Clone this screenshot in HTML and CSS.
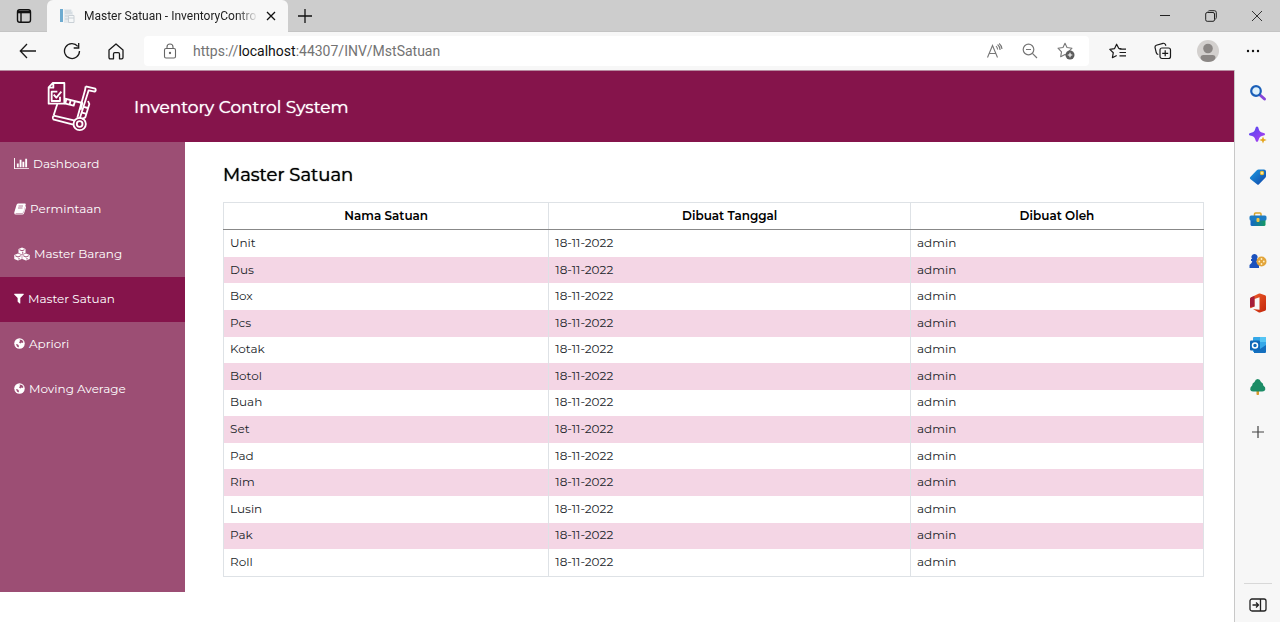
FILE: index.html
```html
<!DOCTYPE html>
<html lang="id">
<head>
<meta charset="utf-8">
<title>Master Satuan - InventoryControl</title>
<link rel="stylesheet" href="styles.css">
</head>
<body>
<div class="browser">
  <div class="tabbar">
    <button class="icon-btn tab-actions" aria-label="Tab actions"><svg width="16" height="16" viewBox="0 0 16 16" fill="none" stroke="#111" stroke-width="1.4"><rect x="1.5" y="1.7" width="13" height="12.6" rx="2.2"/><path d="M1.5 4h13" stroke-width="2.6"/><path d="M5 4v10"/></svg></button>
    <div class="tab">
      <svg class="favicon" width="16" height="16" viewBox="0 0 16 16"><path d="M1 1h3v13H1z" fill="#6eabd0"/><path d="M5 1h7l2 3v11H5z" fill="#e6eaed"/><path d="M6 3h6M6 5h7M6 8h3M6 11h3" stroke="#c6d0d8"/><path d="M9.500 7.500h5.500v7H9.500zM9.500 10h5.500" fill="#f5f7f8" stroke="#c9d0d6"/></svg>
      <span class="tab-title">Master Satuan - InventoryContro</span>
      <button class="icon-btn tab-close" aria-label="Close tab"><svg width="10" height="10" viewBox="0 0 10 10" stroke="#111" stroke-width="1.3"><path d="M1 1l8 8M9 1L1 9"/></svg></button>
    </div>
    <button class="icon-btn new-tab" aria-label="New tab"><svg width="14" height="14" viewBox="0 0 14 14" stroke="#111" stroke-width="1.3"><path d="M7 0v14M0 7h14"/></svg></button>
    <div class="window-controls">
      <button class="icon-btn" aria-label="Minimize"><svg width="12" height="12" viewBox="0 0 12 12" stroke="#222"><path d="M1 5.500h10"/></svg></button>
      <button class="icon-btn" aria-label="Restore"><svg width="12" height="12" viewBox="0 0 12 12" fill="none" stroke="#222"><rect x=".7" y="2.500" width="8.800" height="8.800" rx="1.500"/><path d="M3 1.500Q3.400.7 4.500.7h5q1.800 0 1.800 1.800v5q0 1.300-1 1.700"/></svg></button>
      <button class="icon-btn" aria-label="Close"><svg width="12" height="12" viewBox="0 0 12 12" stroke="#333"><path d="M1 1l10 10M11 1L1 11"/></svg></button>
    </div>
  </div>

  <div class="toolbar">
    <div class="nav-buttons">
      <button class="icon-btn" aria-label="Back"><svg width="18" height="16" viewBox="0 0 18 16" fill="none" stroke="#1a1a1a" stroke-width="1.3"><path d="M17 8H1.500M8 1L1.300 8 8 15"/></svg></button>
      <button class="icon-btn" aria-label="Refresh"><svg width="18" height="18" viewBox="0 0 18 18" fill="none" stroke="#1a1a1a" stroke-width="1.3"><path d="M16.500 9A7.500 7.500 0 1 1 14.800 4.300M15.700 1v5h-5"/></svg></button>
      <button class="icon-btn" aria-label="Home"><svg width="16" height="17" viewBox="0 0 16 17" fill="none" stroke="#1a1a1a" stroke-width="1.3" stroke-linejoin="round"><path d="M1 7l7-6 7 6v7.500q0 1.300-1.300 1.300h-2.200V11q0-1.300-1.300-1.300H6.800q-1.300 0-1.300 1.300v4.800H2.300Q1 15.800 1 14.500z"/></svg></button>
    </div>
    <div class="address">
      <svg width="14" height="16" viewBox="0 0 14 16" fill="none" stroke="#666" stroke-width="1.1"><rect x="1.500" y="5.500" width="11" height="9.500" rx="1.500"/><path d="M4 5.500V4a3 3 0 0 1 6 0v1.500"/><circle cx="7" cy="10" r=".6" fill="#555"/></svg>
      <span class="url">https://<span class="host">localhost</span>:44307/INV/MstSatuan</span>
      <div class="address-actions">
        <button class="icon-btn" aria-label="Read aloud"><svg width="17" height="16" viewBox="0 0 17 16" fill="none" stroke="#777" stroke-width="1.1"><path d="M1.500 14.500L6.500 2.500l5 12M3.200 10.500h6.600M10 3.200q1.500 1.300 1.600 3.300M11.600 1.500q2.300 2 2.500 5.500M13.200.5q2.300 2 2.800 5.500"/></svg></button>
        <button class="icon-btn" aria-label="Zoom out"><svg width="16" height="16" viewBox="0 0 16 16" fill="none" stroke="#777" stroke-width="1.2"><circle cx="6.500" cy="6.500" r="5.300"/><path d="M10.400 10.400l4.600 4.600M4 6.500h5"/></svg></button>
        <button class="icon-btn" aria-label="Add to favorites"><svg width="18" height="18" viewBox="0 0 18 18" fill="none" stroke="#777" stroke-width="1.1" stroke-linejoin="round"><path d="M8 1.200l2 4.300 5 .7-3.500 3.600.7 4.500L8 12.500l-4.300 2.200.8-4.800L1 6.200l5-.7z"/><circle cx="13" cy="13" r="4.500" fill="#5c5c5c" stroke="none"/><path d="M13 10.700v4.600M10.700 13h4.600" stroke="#fff"/></svg></button>
      </div>
    </div>
    <div class="profile-actions">
      <button class="icon-btn" aria-label="Favorites"><svg width="18" height="17" viewBox="0 0 18 17" fill="none" stroke="#1a1a1a" stroke-width="1.2" stroke-linejoin="round"><path d="M12.500 5.800L9.700 5.300 7.600 1.200 5.600 5.600.8 6.400 4.300 9.700l-.9 5 4.300-2.200M10.500 6.200h6.500M10.500 9.500h6.500M10.500 12.800h6.500"/></svg></button>
      <button class="icon-btn" aria-label="Collections"><svg width="18" height="18" viewBox="0 0 18 18" fill="none" stroke="#1a1a1a" stroke-width="1.2"><rect x="6" y="6" width="10.500" height="10.500" rx="2"/><path d="M11.200 8.300v6M8.200 11.300h6M4.300 12.500Q2.800 12.300 2.300 10.800L1 5.500Q.8 3.800 2.300 3.200L9 1.300q1.800-.3 2.400 1.200l.5 1.300"/></svg></button>
      <button class="icon-btn" aria-label="Profile"><svg width="22" height="22" viewBox="0 0 22 22"><defs><clipPath id="avatar"><circle cx="11" cy="11" r="11"/></clipPath></defs><g clip-path="url(#avatar)"><path fill="#d3d0ce" d="M0 0h22v22H0z"/><circle cx="11" cy="8.500" r="4.800" fill="#8b8785"/><path d="M3.500 18q0-3 3-3h9q3 0 3 3l-2 4h-11z" fill="#8b8785"/></g></svg></button>
      <button class="icon-btn" aria-label="More"><svg width="14" height="4" viewBox="0 0 14 4" fill="#111"><circle cx="2" cy="2" r="1.200"/><circle cx="7" cy="2" r="1.200"/><circle cx="12" cy="2" r="1.200"/></svg></button>
    </div>
  </div>

  <div class="viewport">
    <div class="page">
      <header class="app-header">
        <svg class="logo" width="54" height="54" viewBox="140 30 162 162" fill="none" stroke="#fff" stroke-width="5.500" stroke-linejoin="round"><path d="M160 39h35v62h-47V52zM148 53h14V39M174 65h-17v28h25V80M163 74l8 9 15-18"/><path d="M174 102l-11 34M197 86l52 13-5 20M201 87l-3 14 25 6 4-14M214 91l-3 12"/><path d="M163 137l64 15M161 148l61 16M163 137q-5 6-2 11"/><path d="M259 49l29 7q3 6-2 9l-18-4-27 85M259 49l-2 12-23 82M266 93l4 9-12 40-10 5M251 110l14 4M245 127l14 4"/><circle cx="241" cy="162" r="18.500"/><circle cx="241" cy="162" r="8.500"/></svg>
        <h1 class="brand">Inventory Control System</h1>
      </header>
      <div class="app-body">
        <nav class="menu">
          <a href="#"><svg width="15" height="13" viewBox="0 0 2048 1792"><path d="M640 896v512h-256v-512h256zm384-512v1024h-256v-1024h256zm1024 1152v128h-2048v-1536h128v1408h1920zm-640-896v768h-256v-768h256zm384-384v1152h-256v-1152h256z"/></svg>Dashboard</a>
          <a href="#"><svg width="12" height="13" viewBox="0 0 24 26"><path d="M8 3h14q2 0 1.500 2L19 20q-.6 2-2.500 2H4q-1.500 0-1 1h14q1.500 0 2.200-2L23 8q1.500 1 1 3l-4 12q-.7 2-3 2H4q-4 0-3.500-4L5 6q.7-3 3-3z"/><path d="M9 8h9M8 12h9" stroke="#9c4e74" stroke-width="1.500"/></svg>Permintaan</a>
          <a href="#"><svg width="16" height="14" viewBox="0 0 32 28"><path d="M16 1l7 3v8l-7 3-7-3V4zM8 13l7.500 3v8L8 27l-7.500-3v-8zM24 13l7.500 3v8L24 27l-7.500-3v-8z"/><path d="M11 5.500L16 7.500 21 5.500M2.500 17.500L8 20l5.500-2.500M18.500 17.500L24 20l5.500-2.500M17.500 9.500v4M10 22v3M26 22v3" fill="none" stroke="#9c4e74" stroke-width="2"/></svg>Master Barang</a>
          <a href="#" class="active" aria-current="page"><svg width="10" height="13" viewBox="180 130 1440 1600"><path d="M1595 295q17 41-14 70l-493 493v742q0 42-39 59-13 5-25 5-27 0-45-19l-256-256q-19-19-19-45v-486l-493-493q-31-29-14-70 17-39 59-39h1280q42 0 59 39z"/></svg>Master Satuan</a>
          <a href="#"><svg width="11" height="13" viewBox="0 0 22 26"><circle cx="11" cy="13" r="10.500"/><path d="M11 5l5 1 3 4-2 2-2-1-2 2-3-2 2-3zM4 14l4 1 2 3-1 3-3-2z" fill="#9c4e74"/></svg>Apriori</a>
          <a href="#"><svg width="11" height="13" viewBox="0 0 22 26"><circle cx="11" cy="13" r="10.500"/><path d="M11 5l5 1 3 4-2 2-2-1-2 2-3-2 2-3zM4 14l4 1 2 3-1 3-3-2z" fill="#9c4e74"/></svg>Moving Average</a>
        </nav>
        <main class="content">
          <h2 class="title">Master Satuan</h2>
          <table class="grid">
            <thead><tr><th class="col-name">Nama Satuan</th><th class="col-date">Dibuat Tanggal</th><th class="col-by">Dibuat Oleh</th></tr></thead>
            <tbody>
              <tr><td>Unit</td><td>18-11-2022</td><td>admin</td></tr>
              <tr><td>Dus</td><td>18-11-2022</td><td>admin</td></tr>
              <tr><td>Box</td><td>18-11-2022</td><td>admin</td></tr>
              <tr><td>Pcs</td><td>18-11-2022</td><td>admin</td></tr>
              <tr><td>Kotak</td><td>18-11-2022</td><td>admin</td></tr>
              <tr><td>Botol</td><td>18-11-2022</td><td>admin</td></tr>
              <tr><td>Buah</td><td>18-11-2022</td><td>admin</td></tr>
              <tr><td>Set</td><td>18-11-2022</td><td>admin</td></tr>
              <tr><td>Pad</td><td>18-11-2022</td><td>admin</td></tr>
              <tr><td>Rim</td><td>18-11-2022</td><td>admin</td></tr>
              <tr><td>Lusin</td><td>18-11-2022</td><td>admin</td></tr>
              <tr><td>Pak</td><td>18-11-2022</td><td>admin</td></tr>
              <tr><td>Roll</td><td>18-11-2022</td><td>admin</td></tr>
            </tbody>
          </table>
        </main>
      </div>
    </div>

    <aside class="rail">
      <svg width="0" height="0" class="defs"><defs>
        <linearGradient id="blue" x1="0" y1="0" x2="1" y2="1"><stop offset="0" stop-color="#1b9de2"/><stop offset="1" stop-color="#1244a8"/></linearGradient>
        <linearGradient id="violet" x1="0" y1="0" x2="1" y2="1"><stop offset="0" stop-color="#4a4af0"/><stop offset="1" stop-color="#b63df0"/></linearGradient>
        <linearGradient id="teal" x1="0" y1="0" x2="1" y2="0"><stop offset="0" stop-color="#1464c8"/><stop offset="1" stop-color="#159a63"/></linearGradient>
        <linearGradient id="red" x1="0" y1="0" x2="1" y2="1"><stop offset="0" stop-color="#f0602a"/><stop offset="1" stop-color="#c3260c"/></linearGradient>
      </defs></svg>
      <button class="icon-btn" aria-label="Search"><svg width="18" height="18" viewBox="0 0 18 18" fill="none"><path d="M11 11l4.500 4" stroke="#8645d8" stroke-width="3" stroke-linecap="round"/><circle cx="7" cy="7" r="4.800" fill="#dff1fb" stroke="#1a5fb8" stroke-width="2.200"/></svg></button>
      <button class="icon-btn" aria-label="Discover"><svg width="18" height="18" viewBox="0 0 18 18"><path d="M8 .5q1.300 0 1.700 2.300.6 3.300 4.100 3.900 2.300.4 2.300 1.500t-2.300 1.500q-3.500.6-4.100 3.900-.4 2.300-1.700 2.300t-1.700-2.300Q5.700 10.300 2.200 9.700-.1 9.300-.1 8.200t2.300-1.500q3.500-.6 4.100-3.900Q6.700.5 8 .5z" fill="url(#violet)"/><path d="M14 10.500l1 2.500 2.700 1-2.700 1-1 2.500-1-2.500-2.700-1 2.700-1z" fill="#e5a51d"/></svg></button>
      <button class="icon-btn" aria-label="Shopping"><svg width="18" height="18" viewBox="0 0 18 18"><path d="M9.500 1.500h5.500q2 0 2 2V8q0 1-.7 1.700l-6.300 6.500q-1 1-2 0L1.300 11q-1-1 0-2l6.500-6.800q.7-.7 1.700-.7z" fill="url(#blue)"/><circle cx="13" cy="5" r="1.600" fill="#fff3b8" stroke="#e9bb36" stroke-width="1.200"/></svg></button>
      <button class="icon-btn" aria-label="Tools"><svg width="18" height="18" viewBox="0 0 18 18"><path d="M5.500 6V4q0-1 1-1h4.500q1 0 1 1v2" fill="none" stroke="#d9a52c" stroke-width="1.500"/><rect x="1.500" y="8" width="15" height="8" rx="1.500" fill="url(#teal)"/><rect x=".5" y="5.500" width="17" height="5" rx="1.500" fill="#1d7cc4"/><rect x="7.500" y="8" width="3" height="4" rx="1" fill="#f2c744"/></svg></button>
      <button class="icon-btn" aria-label="Games"><svg width="18" height="18" viewBox="0 0 18 18"><path d="M5.500 2a3 3 0 0 1 2.300 5H9v2H7.500q.2 2.500 2.500 4v3H.5v-3Q3 11.500 3.300 9H2V7h1.200A3 3 0 0 1 5.500 2z" fill="#1c52bd"/><circle cx="12.500" cy="9.500" r="5" fill="#e2a43a"/><g fill="#fff0c6"><circle cx="12.500" cy="7" r=".9"/><circle cx="10.300" cy="9.500" r=".9"/><circle cx="14.800" cy="9.500" r=".9"/><circle cx="12.500" cy="12" r=".9"/></g></svg></button>
      <button class="icon-btn" aria-label="Office"><svg width="18" height="20" viewBox="0 0 18 20"><path d="M11 .5l5 1.700q1 .3 1 1.500v12.600q0 1.200-1 1.500l-5 1.700q-.8.200-1.500-.2L4 16l6.500.7V4.300L5.500 6v7.500L1.500 15.300Q1 15 1 14V6q0-1.300 1.200-1.800L9.500.8q.8-.5 1.500-.3z" fill="url(#red)"/><path d="M1 14V6q0-1.300 1.200-1.800L5.500 3v10.500z" fill="#a51d39"/></svg></button>
      <button class="icon-btn" aria-label="Outlook"><svg width="18" height="18" viewBox="0 0 18 18"><path d="M5 1h11q1 0 1 1v14H4V2q0-1 1-1z" fill="#35a8e8"/><path d="M11 1h6v5h-6z" fill="#55c5f4"/><path d="M5 10l6 3 6-4v7q0 1-1 1H5z" fill="#146fbe"/><rect x="1" y="4.500" width="10" height="10" rx="1" fill="#0e67b8"/><circle cx="6" cy="9.500" r="2.500" fill="none" stroke="#fff" stroke-width="1.500"/></svg></button>
      <button class="icon-btn" aria-label="Tree"><svg width="18" height="18" viewBox="0 0 18 18"><path d="M7.500 12h2.500v4.500q-1.200 1-2.500 0z" fill="#d99a2b"/><path d="M8.700 1Q11 1 12 4q2.500 1 2.300 3.500 2.500 1.500 2 4-.5 2-3 2H4q-2.500 0-2.800-2-.2-2.700 2-4Q3 5 5.500 4q1-3 3.200-3z" fill="#1c8c66"/></svg></button>
      <button class="icon-btn customize" aria-label="Customize"><svg width="14" height="14" viewBox="0 0 14 14" stroke="#444" stroke-width="1.200"><path d="M7 1v12M1 7h12"/></svg></button>
      <div class="rail-foot">
        <button class="icon-btn" aria-label="Hide sidebar"><svg width="18" height="14" viewBox="0 0 18 14" fill="none" stroke="#222" stroke-width="1.300"><rect x="1" y="1" width="16" height="12" rx="2"/><path d="M11.500 1v12M3.500 7h6M7 4.500L9.500 7 7 9.500"/></svg></button>
      </div>
    </aside>
  </div>
</div>
</body>
</html>
```
FILE: styles.css
```css
* { box-sizing: border-box; }

body {
  margin: 0;
  background: #fff;
  color: #212529;
  font: 12px/20px Montserrat, Inter, sans-serif;
}

.browser {
  display: flex;
  flex-direction: column;
  min-height: 100vh;
}

.icon-btn {
  display: flex;
  align-items: center;
  justify-content: center;
  padding: 0;
  border: 0;
  background: none;
}

.tabbar {
  display: flex;
  height: 32px;
  background: #cdcdcd;
  border-bottom: 1px solid #c4c4c4;
}

.tab-actions { width: 47px; }

.tab {
  display: flex;
  align-items: center;
  width: 241px;
  height: 32px;
  padding: 0 10px 0 12px;
  background: #f7f7f7;
  border-radius: 6px 6px 0 0;
}

.favicon { flex: none; }

.tab-title {
  flex: 1;
  margin-left: 9px;
  white-space: nowrap;
  color: #222;
  font: 12px/18px "Segoe UI", Roboto, sans-serif;
  mask-image: linear-gradient(to right, #000 88%, transparent);
}

.tab-close { width: 14px; margin-left: 6px; }
.new-tab { width: 34px; }

.window-controls {
  display: flex;
  margin-left: auto;
}

.window-controls .icon-btn { width: 46px; }

.toolbar {
  display: flex;
  align-items: center;
  height: 38px;
  background: #f7f7f7;
}

.nav-buttons {
  display: flex;
  padding: 0 6px;
}

.nav-buttons .icon-btn { width: 44px; }

.address {
  display: flex;
  flex: 1;
  align-items: center;
  height: 30px;
  padding: 0 5px 0 19px;
  background: #fff;
  border-radius: 4px;
}

.url {
  margin-left: 16px;
  color: #737373;
  font: 14px/20px "Segoe UI", Roboto, sans-serif;
}

.host { color: #111; }

.address-actions {
  display: flex;
  margin-left: auto;
}

.address-actions .icon-btn { width: 36px; }

.profile-actions {
  display: flex;
  padding: 0 5px 0 6px;
}

.profile-actions .icon-btn { width: 45px; }

.viewport {
  display: flex;
  flex: 1;
}

.page {
  flex: 1;
  border-top: 1px solid #b78ba0;
}

.app-header {
  display: flex;
  align-items: center;
  height: 71px;
  padding-left: 46px;
  background: #85144b;
}

.brand {
  margin: 0 0 0 34px;
  color: #fff;
  font-size: 17px;
  font-weight: 400;
  line-height: 24px;
  text-shadow: 0 0 1px currentColor;
}

.app-body { display: flex; }

.menu {
  width: 185px;
  background: #9c4e74;
}

.menu a {
  display: flex;
  align-items: center;
  height: 45px;
  padding: 0 14px 2px;
  gap: 4px;
  color: #fff;
  text-decoration: none;
}

.menu svg { fill: #fff; }
.menu .active { background: #85144b; }

.content {
  flex: 1;
  padding: 20px 30px 15px 38px;
}

.title {
  margin: 0 0 14px;
  color: #000;
  font-size: 18px;
  font-weight: 400;
  line-height: 26px;
  text-shadow: 0 0 1px currentColor;
}

.grid {
  width: 100%;
  height: 375px;
  border: 1px solid #dee2e6;
  border-collapse: collapse;
}

.grid th,
.grid td {
  padding: 0 6px 1px;
  border-right: 1px solid #dee2e6;
}

.grid th {
  height: 27px;
  border-bottom: 1px solid #888;
  color: #000;
  font-weight: 600;
}

.grid tbody tr:nth-child(even) { background: #f4d6e5; }

.col-name { width: 33.2%; }
.col-date { width: 36.9%; }
.col-by { width: 29.9%; }

.rail {
  display: flex;
  flex-direction: column;
  align-items: center;
  width: 46px;
  padding-top: 2px;
  border-left: 1px solid #c8c8c8;
  background: #f7f7f7;
}

.defs { position: absolute; }

.rail .icon-btn {
  width: 42px;
  height: 42px;
}

.rail .customize { height: 48px; }

.rail-foot {
  display: flex;
  justify-content: center;
  width: 28px;
  height: 39px;
  margin-top: auto;
  border-top: 1px solid #d8d8d8;
}

.rail-foot .icon-btn { flex: none; }
```
